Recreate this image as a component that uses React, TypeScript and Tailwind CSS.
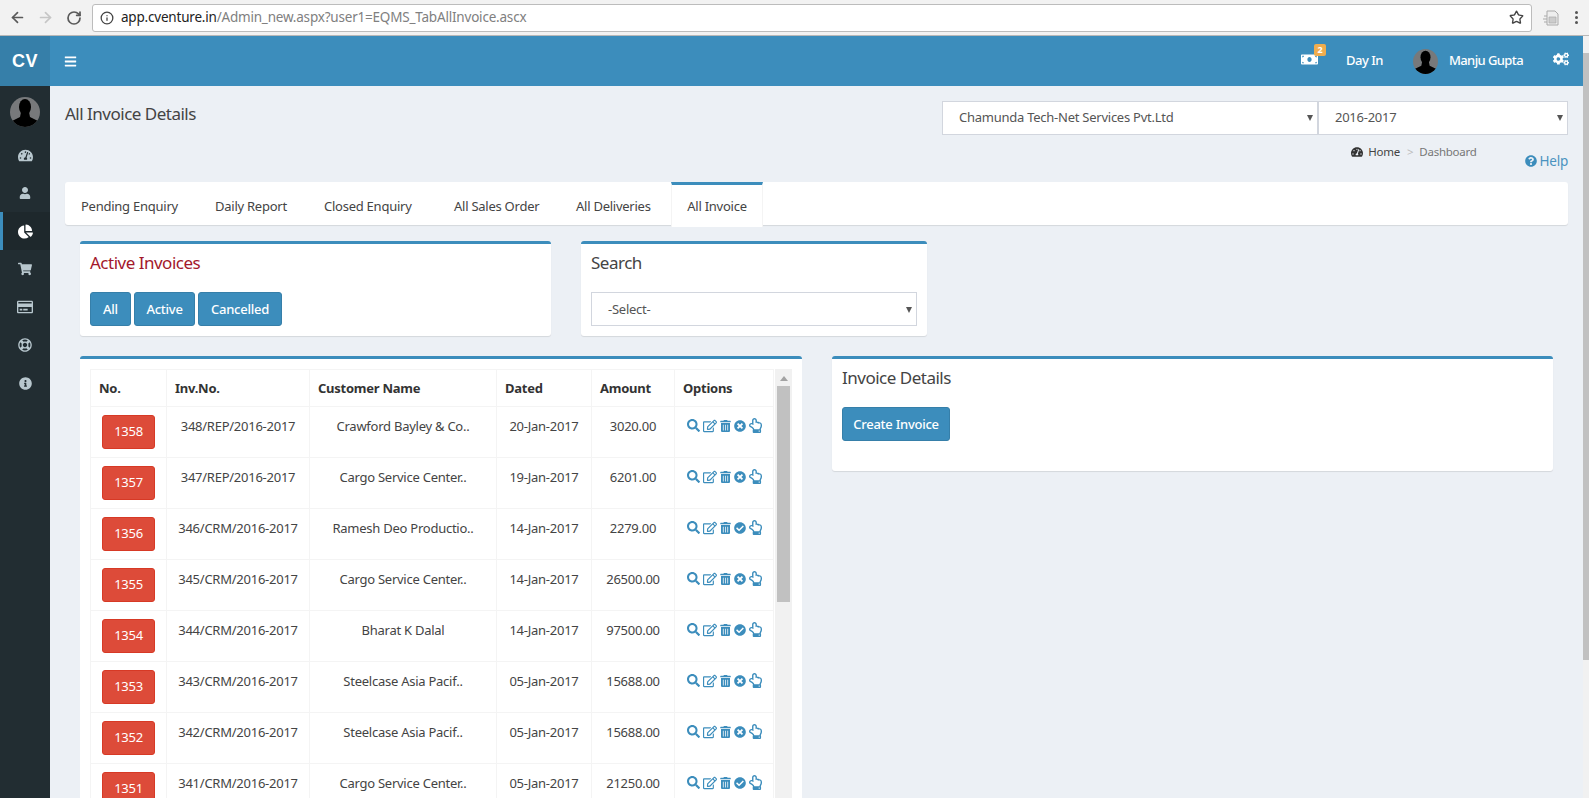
import { ArrowLeft, ArrowRight, RotateCw, Info, Star } from "lucide-react";
import {
  FaBars,
  FaChartPie,
  FaCheckCircle,
  FaCogs,
  FaInfoCircle,
  FaMoneyBill,
  FaQuestionCircle,
  FaRegCreditCard,
  FaRegEdit,
  FaRegHandPointUp,
  FaRegLifeRing,
  FaSearch,
  FaShoppingCart,
  FaTachometerAlt,
  FaTimesCircle,
  FaTrashAlt,
  FaUser,
} from "react-icons/fa";

// ── Data ─────────────────────────────────────────────────────────────────────

const TABS = [
  { label: "Pending Enquiry", cls: "w-[134px]" },
  { label: "Daily Report", cls: "w-[109px]" },
  { label: "Closed Enquiry", cls: "w-[130px]" },
  { label: "All Sales Order", cls: "w-[122px]" },
  { label: "All Deliveries", cls: "w-[95px]" },
];

const ROWS = [
  { no: "1358", inv: "348/REP/2016-2017", name: "Crawford Bayley & Co..", date: "20-Jan-2017", amt: "3020.00", ok: false },
  { no: "1357", inv: "347/REP/2016-2017", name: "Cargo Service Center..", date: "19-Jan-2017", amt: "6201.00", ok: false },
  { no: "1356", inv: "346/CRM/2016-2017", name: "Ramesh Deo Productio..", date: "14-Jan-2017", amt: "2279.00", ok: true },
  { no: "1355", inv: "345/CRM/2016-2017", name: "Cargo Service Center..", date: "14-Jan-2017", amt: "26500.00", ok: false },
  { no: "1354", inv: "344/CRM/2016-2017", name: "Bharat K Dalal", date: "14-Jan-2017", amt: "97500.00", ok: true },
  { no: "1353", inv: "343/CRM/2016-2017", name: "Steelcase Asia Pacif..", date: "05-Jan-2017", amt: "15688.00", ok: false },
  { no: "1352", inv: "342/CRM/2016-2017", name: "Steelcase Asia Pacif..", date: "05-Jan-2017", amt: "15688.00", ok: false },
  { no: "1351", inv: "341/CRM/2016-2017", name: "Cargo Service Center..", date: "05-Jan-2017", amt: "21250.00", ok: true },
];

const NAV = [
  { icon: <FaTachometerAlt className="h-[15px] w-[15px]" /> },
  { icon: <FaUser className="h-[12px] w-[12px]" /> },
  { icon: <FaChartPie className="h-[15px] w-[15px]" />, active: true },
  { icon: <FaShoppingCart className="h-[14px] w-[14px]" /> },
  { icon: <FaRegCreditCard className="h-[16px] w-[16px]" /> },
  { icon: <FaRegLifeRing className="h-[14px] w-[14px]" /> },
  { icon: <FaInfoCircle className="h-[13px] w-[13px]" /> },
];

function Avatar({ className }: { className: string }) {
  return (
    <svg viewBox="0 0 30 30" className={className}>
      <clipPath id="avatar-clip">
        <circle cx="15" cy="15" r="15" />
      </clipPath>
      <g clipPath="url(#avatar-clip)">
        <rect width="30" height="30" fill="#77797b" />
        <ellipse cx="15" cy="10" rx="6" ry="8" fill="#000" />
        <path d="M11 15 L19 15 L20 20 L30 25 L30 30 L0 30 L0 25 L10 20 Z" fill="#000" />
      </g>
    </svg>
  );
}

function SelectBox({ text, cls }: { text: string; cls: string }) {
  return (
    <div className={`flex h-[34px] items-center justify-between border border-[#d2d6de] bg-white pl-[16px] pr-[4px] text-[13px] text-[#555] ${cls}`}>
      <span>{text}</span>
      <span className="h-0 w-0 border-x-[3.5px] border-t-[6px] border-x-transparent border-t-[#555]" />
    </div>
  );
}

function Btn({ children, cls }: { children: React.ReactNode; cls: string }) {
  return (
    <button className={`h-[34px] rounded-[3px] border border-[#367fa9] bg-[#3c8dbc] pt-[2px] text-[13px] font-medium text-white ${cls}`}>
      {children}
    </button>
  );
}

export default function App() {
  return (
    <div className="flex h-[798px] w-[1589px] flex-col overflow-hidden bg-[#ecf0f5] font-['Noto_Sans',sans-serif] tracking-[-0.25px] text-[#444]">
      {/* Browser bar */}
      <div className="flex h-[36px] shrink-0 items-center border-b border-[#b8b8b8] bg-[#f2f2f2]">
        <ArrowLeft className="ml-[9px] h-[17px] w-[17px] text-[#5a5a5a]" strokeWidth={2.4} />
        <ArrowRight className="ml-[11px] h-[17px] w-[17px] text-[#c6c6c6]" strokeWidth={2.4} />
        <RotateCw className="ml-[12px] h-[16px] w-[16px] text-[#5a5a5a]" strokeWidth={2.6} />
        <div className="ml-[10px] flex h-[28px] w-[1440px] items-center rounded-[3px] border border-[#bcbcbc] bg-white pl-[7px] pr-[7px] text-[13.5px] tracking-[-0.2px]">
          <Info className="h-[14px] w-[14px] text-[#444]" strokeWidth={2.2} />
          <span className="ml-[7px] text-[#222]">app.cventure.in</span>
          <span className="text-[#808080]">/Admin_new.aspx?user1=EQMS_TabAllInvoice.ascx</span>
          <Star className="ml-auto h-[15px] w-[15px] text-[#444]" strokeWidth={2.2} />
        </div>
        <svg viewBox="0 0 16 16" className="ml-[11px] h-[16px] w-[16px] text-[#aaa]">
          <path d="M4 1h8l3 3v11H4z" fill="#eee" stroke="currentColor" />
          <path d="M6 7h7v6H6z" fill="#ccc" stroke="currentColor" strokeWidth="0.7" />
          <path d="M1 6h3M0 9h4M1 12h3" stroke="currentColor" />
        </svg>
        <div className="ml-[16px] flex flex-col gap-[2px]">
          <span className="h-[3px] w-[3px] rounded-full bg-[#555]" />
          <span className="h-[3px] w-[3px] rounded-full bg-[#555]" />
          <span className="h-[3px] w-[3px] rounded-full bg-[#555]" />
        </div>
      </div>

      <div className="flex min-h-0 flex-1">
        <div className="flex min-w-0 flex-1 flex-col">
          {/* Header */}
          <div className="flex h-[50px] shrink-0 items-center bg-[#3c8dbc] text-white">
            <div className="flex h-full w-[50px] items-center justify-center bg-[#367fa9] font-['Liberation_Sans',sans-serif] text-[18px] font-bold tracking-[0.5px]">
              CV
            </div>
            <FaBars className="ml-[14px] h-[13px] w-[13px]" />
            <div className="relative ml-auto">
              <FaMoneyBill className="h-[17px] w-[17px] -translate-y-[2px]" />
              <span className="absolute -right-[8px] -top-[9px] flex h-[12px] w-[12px] items-center justify-center rounded-[2px] bg-[#f0ad4e] text-[9px] font-bold">
                2
              </span>
            </div>
            <span className="ml-[28px] text-[13px] font-medium tracking-[-0.5px]">Day In</span>
            <Avatar className="ml-[30px] h-[25px] w-[25px]" />
            <span className="ml-[11px] text-[13px] font-medium tracking-[-0.6px]">Manju Gupta</span>
            <FaCogs className="ml-[30px] mr-[14px] h-[16px] w-[16px] -translate-y-[2px]" />
          </div>

          <div className="flex min-h-0 flex-1">
            {/* Sidebar */}
            <div className="flex w-[50px] shrink-0 flex-col bg-[#222d32] pt-[11px]">
              <Avatar className="mx-auto h-[30px] w-[30px]" />
              <div className="mt-[9px] flex flex-col">
                {NAV.map((n, i) => (
                  <div
                    key={i}
                    className={
                      n.active
                        ? "flex h-[38px] items-center justify-center border-l-[3px] border-[#3c8dbc] bg-[#1e282c] pr-[3px] text-white"
                        : "flex h-[38px] items-center justify-center text-[#b8c7ce]"
                    }
                  >
                    {n.icon}
                  </div>
                ))}
              </div>
            </div>

            {/* Content */}
            <div className="min-w-0 flex-1 overflow-hidden">
              <div className="flex justify-between pl-[15px] pr-[15px] pt-[15px]">
                <h1 className="text-[17px] leading-[26px] tracking-[-0.5px] text-[#444]">All Invoice Details</h1>
                <div className="flex">
                  <SelectBox text="Chamunda Tech-Net Services Pvt.Ltd" cls="w-[376px]" />
                  <SelectBox text="2016-2017" cls="w-[250px]" />
                </div>
              </div>

              <div className="flex h-[47px] justify-end pr-[15px]">
                <div className="mr-[48px] mt-[8px] flex h-[18px] items-center text-[11.5px]">
                  <FaTachometerAlt className="h-[12px] w-[12px] text-[#333]" />
                  <span className="ml-[5px] text-[#444]">Home</span>
                  <span className="ml-[7px] mr-[6px] text-[#bbb]">&gt;</span>
                  <span className="text-[#777]">Dashboard</span>
                </div>
                <div className="mt-[16px] flex h-[20px] items-center text-[13.5px] text-[#4a93c0]">
                  <FaQuestionCircle className="mr-[3px] h-[12px] w-[12px] text-[#3c8dbc]" />
                  Help
                </div>
              </div>

              {/* Tabs */}
              <div className="ml-[15px] mr-[15px] flex h-[43px] rounded-[3px] bg-white text-[13px] shadow-[0_1px_1px_rgba(0,0,0,0.1)]">
                <div className="flex items-center pl-[16px] pt-[6px]">
                  {TABS.map((t) => (
                    <span key={t.label} className={t.cls}>
                      {t.label}
                    </span>
                  ))}
                </div>
                <div className="z-10 flex h-[45px] w-[92px] items-center justify-center border-x border-[#f4f4f4] border-t-[3px] border-t-[#3c8dbc] bg-white pt-[1px]">
                  All Invoice
                </div>
              </div>

              {/* Filter cards */}
              <div className="ml-[30px] mt-[16px] flex gap-[30px]">
                <div className="h-[95px] w-[471px] rounded-[3px] border-t-[3px] border-[#3c8dbc] bg-white px-[10px] pt-[7px] shadow-[0_1px_1px_rgba(0,0,0,0.1)]">
                  <h3 className="text-[17px] leading-[24px] tracking-[-0.5px] text-[#a3182b]">Active Invoices</h3>
                  <div className="mt-[17px] flex gap-[3px]">
                    <Btn cls="w-[41px]">All</Btn>
                    <Btn cls="w-[61px]">Active</Btn>
                    <Btn cls="w-[84px]">Cancelled</Btn>
                  </div>
                </div>
                <div className="h-[95px] w-[346px] rounded-[3px] border-t-[3px] border-[#3c8dbc] bg-white px-[10px] pt-[7px] shadow-[0_1px_1px_rgba(0,0,0,0.1)]">
                  <h3 className="text-[17px] leading-[24px] tracking-[-0.5px] text-[#444]">Search</h3>
                  <SelectBox text="-Select-" cls="mt-[17px] w-[326px] pt-[2px]" />
                </div>
              </div>

              <div className="ml-[30px] mt-[20px] flex items-start gap-[30px]">
                {/* Invoice table */}
                <div className="flex h-[500px] w-[722px] rounded-t-[3px] border-t-[3px] border-[#3c8dbc] bg-white pl-[10px] pt-[10px]">
                  <table className="h-fit w-[683px] table-fixed border-collapse text-[13px]">
                    <colgroup>
                      <col className="w-[76px]" />
                      <col className="w-[143px]" />
                      <col className="w-[187px]" />
                      <col className="w-[95px]" />
                      <col className="w-[83px]" />
                      <col className="w-[99px]" />
                    </colgroup>
                    <thead>
                      <tr className="h-[37px] text-left font-bold text-[#333]">
                        {["No.", "Inv.No.", "Customer Name", "Dated", "Amount", "Options"].map((h) => (
                          <th key={h} className="border border-[#f4f4f4] pl-[8px] pt-[2px] font-bold">
                            {h}
                          </th>
                        ))}
                      </tr>
                    </thead>
                    <tbody>
                      {ROWS.map((r) => (
                        <tr key={r.no} className="h-[51px]">
                          <td className="border border-[#f4f4f4] pl-[11px] align-top">
                            <div className="mt-[8px] flex h-[34px] w-[53px] items-center justify-center rounded-[3px] border border-[#d73925] bg-[#dd4b39] text-white">
                              {r.no}
                            </div>
                          </td>
                          <td className="border border-[#f4f4f4] pt-[10px] text-center align-top">{r.inv}</td>
                          <td className="border border-[#f4f4f4] pt-[10px] text-center align-top">{r.name}</td>
                          <td className="border border-[#f4f4f4] pt-[10px] text-center align-top">{r.date}</td>
                          <td className="border border-[#f4f4f4] pt-[10px] text-center align-top">{r.amt}</td>
                          <td className="border border-[#f4f4f4] align-top">
                            <div className="mt-[11px] flex items-center gap-[3px] pl-[12px] text-[#3c8dbc]">
                              <FaSearch className="h-[13px] w-[13px]" />
                              <FaRegEdit className="h-[14px] w-[14px]" />
                              <FaTrashAlt className="h-[12px] w-[11px]" />
                              {r.ok ? <FaCheckCircle className="h-[12px] w-[12px]" /> : <FaTimesCircle className="h-[12px] w-[12px]" />}
                              <FaRegHandPointUp className="h-[15px] w-[13px]" />
                            </div>
                          </td>
                        </tr>
                      ))}
                    </tbody>
                  </table>
                  {/* Table scrollbar */}
                  <div className="ml-[1px] flex w-[17px] flex-col items-center bg-[#f1f1f1]">
                    <span className="mt-[7px] h-0 w-0 border-x-[4px] border-b-[5px] border-x-transparent border-b-[#a3a3a3]" />
                    <div className="mt-[5px] h-[216px] w-[13px] bg-[#c1c1c1]" />
                  </div>
                </div>

                {/* Invoice details */}
                <div className="h-[115px] w-[721px] rounded-[3px] border-t-[3px] border-[#3c8dbc] bg-white px-[10px] pt-[7px] shadow-[0_1px_1px_rgba(0,0,0,0.1)]">
                  <h3 className="text-[17px] leading-[24px] tracking-[-0.5px] text-[#444]">Invoice Details</h3>
                  <Btn cls="mt-[17px] w-[108px]">Create Invoice</Btn>
                </div>
              </div>
            </div>
          </div>
        </div>

        {/* Page scrollbar */}
        <div className="w-[6px] shrink-0 bg-[#f1f1f1]">
          <div className="mt-[17px] h-[607px] bg-[#c1c1c1]" />
        </div>
      </div>
    </div>
  );
}
